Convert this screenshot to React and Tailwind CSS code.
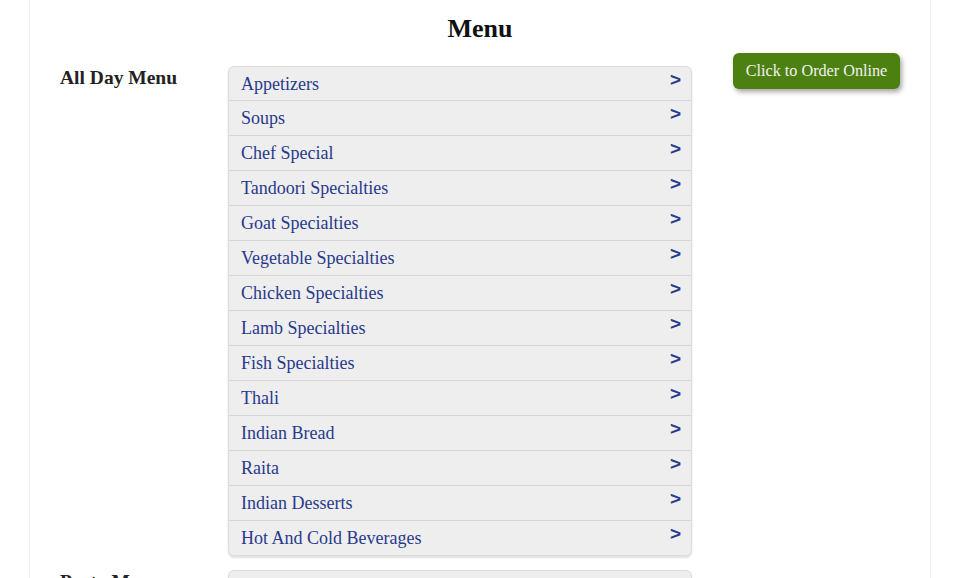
import React from "react";

const allDay = [
  "Appetizers",
  "Soups",
  "Chef Special",
  "Tandoori Specialties",
  "Goat Specialties",
  "Vegetable Specialties",
  "Chicken Specialties",
  "Lamb Specialties",
  "Fish Specialties",
  "Thali",
  "Indian Bread",
  "Raita",
  "Indian Desserts",
  "Hot And Cold Beverages",
];

const party = ["Party Trays"];

const MenuList = ({ items }) => {
  return (
    <div className="w-[464px] mt-[13px] rounded-md border border-[#dcdcdc] bg-[#eeeeee] shadow-[0_2px_2px_rgba(0,0,0,0.12)] overflow-hidden">
      {items.map((item, i) => (
        <div
          key={item}
          className={
            "flex justify-between pl-3 pr-[10px] " +
            (i > 0 ? "h-[35px] border-t border-[#d6d6d6]" : "h-[33px]")
          }
        >
          <span className="pt-px text-[18px] leading-[33px] text-[#283a8c]">
            {item}
          </span>
          <span className="font-['Liberation_Sans',sans-serif] font-bold text-[19px] leading-[26px] text-[#283a8c]">
            &gt;
          </span>
        </div>
      ))}
    </div>
  );
};

const Section = ({ title, items, button }) => {
  return (
    <div className="flex">
      <div className="w-[168px] pt-[13px] text-[19.5px] leading-[24px] font-bold text-[#222]">
        {title}
      </div>
      <MenuList items={items} />
      <div className="pl-[41px]">
        {button && (
          <button className="h-9 w-[167px] rounded-md bg-[#4c8010] text-[16.2px] text-[#f2f2f2] shadow-[2px_3px_5px_rgba(0,0,0,0.35)]">
            Click to Order Online
          </button>
        )}
      </div>
    </div>
  );
};

const App = () => {
  return (
    <div className="min-h-screen bg-white font-['Liberation_Serif',serif]">
      <div className="mx-[29px] min-h-screen border-x border-[#f0f0f0] px-[30px]">
        <h1 className="pt-[13px] mb-2 text-center text-[26px] leading-[32px] font-bold text-[#111]">
          Menu
        </h1>
        <div className="flex flex-col gap-px">
          <Section title="All Day Menu" items={allDay} button />
          <Section title="Party Menu" items={party} />
        </div>
      </div>
    </div>
  );
};

export default App;
